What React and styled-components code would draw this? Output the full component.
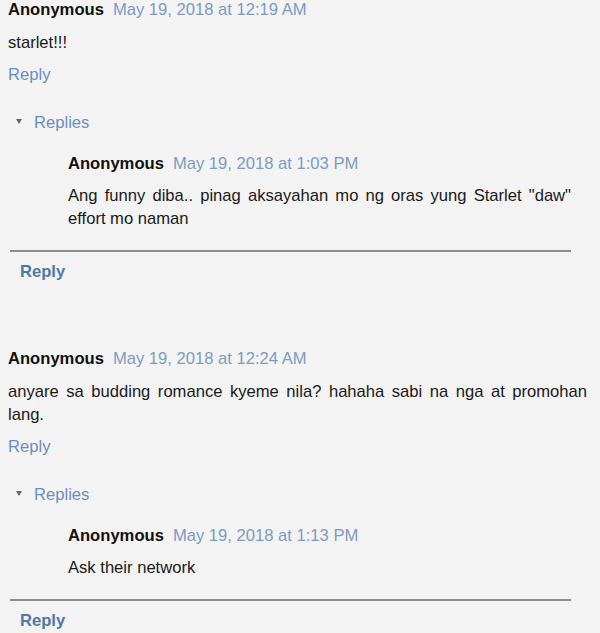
import React from "react";
import styled, { createGlobalStyle } from "styled-components";

const comments = [
    {
        id: 1,
        author: "Anonymous",
        date: "May 19, 2018 at 12:19 AM",
        body: "starlet!!!",
        replies: [
            {
                id: 11,
                author: "Anonymous",
                date: "May 19, 2018 at 1:03 PM",
                body: 'Ang funny diba.. pinag aksayahan mo ng oras yung Starlet "daw" effort mo naman',
            },
        ],
    },
    {
        id: 2,
        author: "Anonymous",
        date: "May 19, 2018 at 12:24 AM",
        body: "anyare sa budding romance kyeme nila? hahaha sabi na nga at promohan lang.",
        replies: [
            {
                id: 21,
                author: "Anonymous",
                date: "May 19, 2018 at 1:13 PM",
                body: "Ask their network",
            },
        ],
    },
];

const App = () => {
    return (
        <>
            <GlobalStyle />
            <Page>
                {comments.map((c) => (
                    <Thread key={c.id}>
                        <Header>
                            <Author>{c.author}</Author>
                            <Stamp>{c.date}</Stamp>
                        </Header>
                        <Body>{c.body}</Body>
                        <ReplyLink>Reply</ReplyLink>
                        <Toggle>
                            <Caret />
                            Replies
                        </Toggle>
                        <ReplyBox>
                            {c.replies.map((r) => (
                                <Nested key={r.id}>
                                    <Header>
                                        <Author>{r.author}</Author>
                                        <Stamp>{r.date}</Stamp>
                                    </Header>
                                    <Body>{r.body}</Body>
                                </Nested>
                            ))}
                            <Divider />
                            <ThreadReply>Reply</ThreadReply>
                        </ReplyBox>
                    </Thread>
                ))}
            </Page>
        </>
    );
};

export default App;

const GlobalStyle = createGlobalStyle`
    html, body {
        margin: 0;
        padding: 0;
        background: #f3f3f3;
    }
    body {
        font-family: "Liberation Sans", Arial, sans-serif;
        font-size: 16.6px;
        color: #111;
    }
`;

const Page = styled.div`
    width: 600px;
    height: 633px;
    overflow: hidden;
    background: #f3f3f3;
    padding: 0 13px 0 8px;
    box-sizing: border-box;
    display: flex;
    flex-direction: column;
    gap: 66px;
`;

const Thread = styled.div`
    display: flex;
    flex-direction: column;
`;

const Header = styled.div`
    display: flex;
    align-items: baseline;
    gap: 9px;
    line-height: 20px;
    white-space: nowrap;
`;

const Author = styled.span`
    font-weight: bold;
    color: #111;
`;

const Stamp = styled.span`
    color: #7d9bbf;
`;

const Body = styled.div`
    margin-top: 10.5px;
    line-height: 23px;
    text-align: justify;
    color: #1a1a1a;
`;

const ReplyLink = styled.div`
    margin-top: 9px;
    line-height: 23px;
    color: #6b8fbc;
`;

const Toggle = styled.div`
    margin-top: 25px;
    line-height: 23px;
    color: #6b8fbc;
    display: flex;
    align-items: center;
    padding-left: 8px;
    gap: 12px;
`;

const Caret = styled.span`
    width: 0;
    height: 0;
    border-left: 3.5px solid transparent;
    border-right: 3.5px solid transparent;
    border-top: 5px solid #666;
    margin-top: -2px;
`;

const ReplyBox = styled.div`
    margin: 0 16px 0 2px;
    display: flex;
    flex-direction: column;
`;

const Nested = styled.div`
    margin-top: 20px;
    padding-left: 58px;
`;

const Divider = styled.div`
    margin-top: 19.5px;
    height: 2px;
    background: #8d8d8d;
`;

const ThreadReply = styled.div`
    margin-top: 8.5px;
    padding-left: 10px;
    line-height: 23px;
    font-weight: bold;
    color: #4f7aa6;
`;
